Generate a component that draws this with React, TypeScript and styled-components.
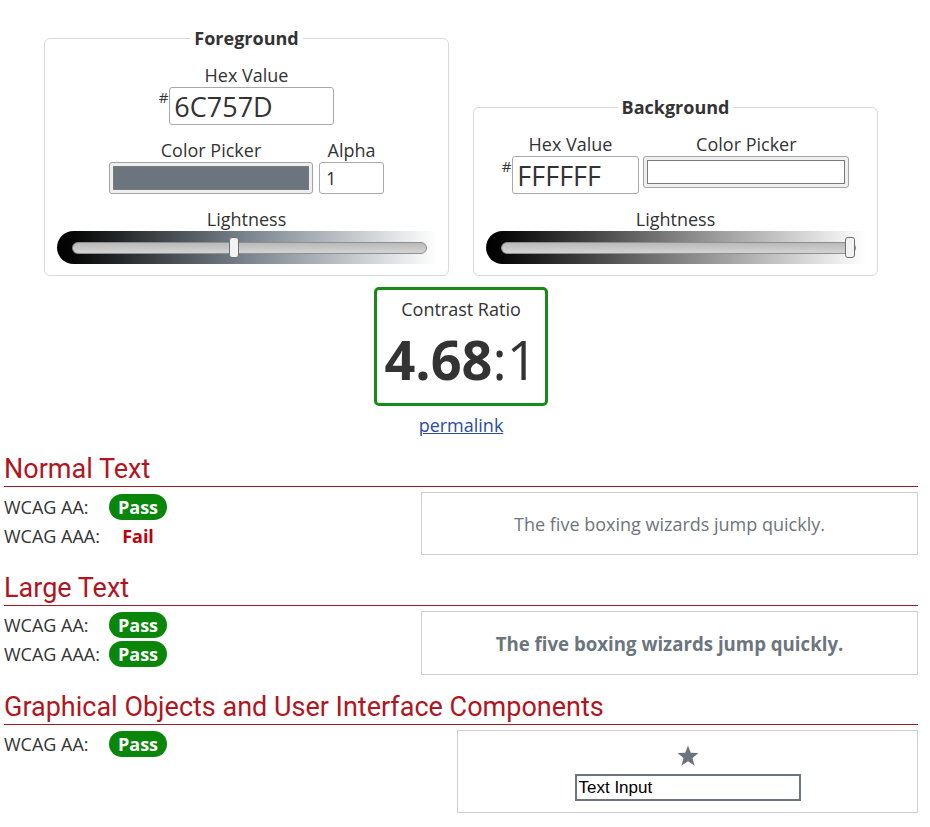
import React from 'react';
import styled, { createGlobalStyle } from 'styled-components';

const Global = createGlobalStyle`
  * { box-sizing: border-box; }
  body {
    margin: 0;
    background: #fff;
    color: #333;
    font-family: "Open Sans", "Liberation Sans", sans-serif;
    font-size: 18px;
  }
`;

const Page = styled.main`
  width: 930px;
  padding: 27px 12px 20px 4px;
`;

const Pickers = styled.div`
  display: flex;
  justify-content: center;
  align-items: flex-end;
  gap: 24px;
`;

const Panel = styled.fieldset`
  width: 405px;
  min-inline-size: 0;
  margin: 0;
  padding: 14px 10px 11px;
  border: 1px solid #d9d9d9;
  border-radius: 6px;
  display: flex;
  flex-direction: column;
  align-items: center;
  gap: 14px;
`;

const Legend = styled.legend`
  margin: 0 auto;
  padding: 0 4px;
  font-weight: 700;
  font-size: 18px;
  line-height: 23px;
  color: #333;
`;

const Row = styled.div`
  display: flex;
  align-items: flex-start;
  gap: ${p => p.$gap ?? 6}px;
`;

const Field = styled.div`
  display: flex;
  flex-direction: column;
  align-items: center;
`;

const Label = styled.label`
  font-size: 18px;
  line-height: 23px;
  color: #333;
`;

const HexGroup = styled.div`
  display: flex;
  align-items: flex-start;
`;

const Hash = styled.span`
  font-size: 15px;
  line-height: 20px;
  margin-right: 1px;
  color: #333;
`;

const HexInput = styled.input`
  width: ${p => p.$w}px;
  height: 38px;
  margin: 0;
  padding: 0 4px;
  border: 1px solid #a9a9a9;
  border-radius: 3px;
  font-family: "Open Sans", sans-serif;
  font-size: 27px;
  color: #333;
  background: #fff;
`;

const ColorInput = styled.input`
  width: ${p => p.$w}px;
  height: 32px;
  margin: 0;
  padding: 3px;
  border: 1px solid #a3a3a3;
  border-radius: 3px;
  background: #efefef;
  &::-webkit-color-swatch-wrapper { padding: 0; }
  &::-webkit-color-swatch { border: 1px solid #7a7a7a; border-radius: 0; }
`;

const AlphaInput = styled.input`
  width: 65px;
  height: 32px;
  margin: 0;
  padding: 0 6px;
  border: 1px solid #a9a9a9;
  border-radius: 3px;
  font-family: "Open Sans", sans-serif;
  font-size: 18px;
  color: #333;
`;

const Range = styled.input`
  -webkit-appearance: none;
  appearance: none;
  display: block;
  width: 380px;
  height: 33px;
  margin: 0;
  padding: 0 10px 0 15px;
  border-radius: 17px 0 0 17px;
  background: linear-gradient(to right, #000 0%, #050505 4%, ${p => p.$mid} 50%, #fff 100%);
  &::-webkit-slider-runnable-track {
    height: 12px;
    background: linear-gradient(#b9b9b9, #d4d4d4);
    border: 1px solid #8f8f8f;
    border-radius: 6px;
  }
  &::-webkit-slider-thumb {
    -webkit-appearance: none;
    appearance: none;
    width: 10px;
    height: 21px;
    margin-top: -5.5px;
    background: #f3f3f3;
    border: 1px solid #6f6f6f;
    border-radius: 3px;
  }
`;

const RatioArea = styled.section`
  display: flex;
  flex-direction: column;
  align-items: center;
  margin-top: 11px;
`;

const RatioBox = styled.div`
  width: 174px;
  padding: 8px 0 12px;
  border: 3px solid #178a17;
  border-radius: 5px;
  text-align: center;
`;

const RatioTitle = styled.div`
  font-size: 18px;
  line-height: 23px;
`;

const RatioValue = styled.div`
  margin-top: 6px;
  font-size: 54px;
  line-height: 64px;
  color: #333;
  b { font-weight: 700; }
`;

const Permalink = styled.a`
  margin-top: 8px;
  font-size: 18px;
  line-height: 23px;
  color: #2a4b9f;
  text-decoration: underline;
`;

const Heading = styled.h2`
  margin: ${p => p.$top ?? 18}px 0 0;
  padding-bottom: 2px;
  border-bottom: 1px solid #9e1c26;
  font-family: Roboto, "Liberation Sans", sans-serif;
  font-weight: 400;
  font-size: 27px;
  line-height: 30px;
  color: #b0161f;
`;

const Results = styled.div`
  display: grid;
  grid-template-columns: 1fr ${p => p.$box}px;
  margin-top: 5px;
`;

const Checks = styled.div`
  display: grid;
  grid-template-columns: 105px 58px;
  grid-auto-rows: 29px;
  align-items: center;
  align-content: start;
  margin-top: ${p => p.$shift ?? 0}px;
`;

const CheckLabel = styled.span`
  font-size: 18px;
  line-height: 24px;
  color: #333;
`;

const Verdict = styled.span`
  height: 26px;
  border-radius: 13px;
  font-weight: 700;
  font-size: 18px;
  line-height: 26px;
  text-align: center;
  color: ${p => (p.$pass ? '#fff' : '#c0000c')};
  background: ${p => (p.$pass ? '#0a870a' : 'transparent')};
`;

const Sample = styled.div`
  height: ${p => p.$h}px;
  border: 1px solid #cfcfcf;
  display: flex;
  flex-direction: column;
  align-items: center;
  justify-content: center;
  gap: 6px;
  color: #6c757d;
  font-size: ${p => (p.$large ? '18.67px' : '18px')};
  font-weight: ${p => (p.$large ? 700 : 400)};
`;

const Star = styled.svg`
  width: 24px;
  height: 24px;
  fill: #6c757d;
  margin-top: 2px;
`;

const DemoInput = styled.input`
  width: 226px;
  height: 27px;
  margin: 0;
  padding: 0 2px;
  border: 2px solid #6c757d;
  font-family: "Liberation Sans", Arial, sans-serif;
  font-size: 17px;
  color: #000;
  background: #fff;
`;

const Check = ({ label, pass }: { label: string; pass: boolean }) => (
  <>
    <CheckLabel>{label}</CheckLabel>
    <Verdict $pass={pass}>{pass ? 'Pass' : 'Fail'}</Verdict>
  </>
);

export default function App() {
  return (
    <>
      <Global />
      <Page>
        <Pickers>
          <Panel>
            <Legend>Foreground</Legend>
            <Field>
              <Label htmlFor="fg">Hex Value</Label>
              <HexGroup>
                <Hash>#</Hash>
                <HexInput id="fg" $w={165} defaultValue="6C757D" />
              </HexGroup>
            </Field>
            <Row $gap={6}>
              <Field>
                <Label>Color Picker</Label>
                <ColorInput type="color" $w={204} defaultValue="#6c757d" />
              </Field>
              <Field>
                <Label>Alpha</Label>
                <AlphaInput defaultValue="1" />
              </Field>
            </Row>
            <Field>
              <Label>Lightness</Label>
              <Range type="range" min={0} max={100} step={0.1} defaultValue={45.7} $mid="#7a848e" />
            </Field>
          </Panel>
          <Panel>
            <Legend>Background</Legend>
            <Row $gap={4}>
              <Field>
                <Label htmlFor="bg">Hex Value</Label>
                <HexGroup>
                  <Hash>#</Hash>
                  <HexInput id="bg" $w={127} defaultValue="FFFFFF" />
                </HexGroup>
              </Field>
              <Field>
                <Label>Color Picker</Label>
                <ColorInput type="color" $w={206} defaultValue="#ffffff" />
              </Field>
            </Row>
            <Field>
              <Label>Lightness</Label>
              <Range type="range" min={0} max={100} step={0.1} defaultValue={100} $mid="#808080" />
            </Field>
          </Panel>
        </Pickers>

        <RatioArea>
          <RatioBox>
            <RatioTitle>Contrast Ratio</RatioTitle>
            <RatioValue>
              <b>4.68</b>:1
            </RatioValue>
          </RatioBox>
          <Permalink href="#">permalink</Permalink>
        </RatioArea>

        <Heading $top={17}>Normal Text</Heading>
        <Results $box={497}>
          <Checks>
            <Check label="WCAG AA:" pass />
            <Check label="WCAG AAA:" pass={false} />
          </Checks>
          <Sample $h={63}>The five boxing wizards jump quickly.</Sample>
        </Results>

        <Heading>Large Text</Heading>
        <Results $box={497}>
          <Checks $shift={-1}>
            <Check label="WCAG AA:" pass />
            <Check label="WCAG AAA:" pass />
          </Checks>
          <Sample $h={64} $large>The five boxing wizards jump quickly.</Sample>
        </Results>

        <Heading $top={17}>Graphical Objects and User Interface Components</Heading>
        <Results $box={461}>
          <Checks $shift={-1}>
            <Check label="WCAG AA:" pass />
          </Checks>
          <Sample $h={83}>
            <Star viewBox="0 0 24 24" aria-hidden="true">
              <polygon points="12,1.5 14.8,8.8 22.5,9.1 16.5,14 18.5,21.6 12,17.3 5.5,21.6 7.5,14 1.5,9.1 9.2,8.8" />
            </Star>
            <DemoInput defaultValue="Text Input" aria-label="Text Input" />
          </Sample>
        </Results>
      </Page>
    </>
  );
}
